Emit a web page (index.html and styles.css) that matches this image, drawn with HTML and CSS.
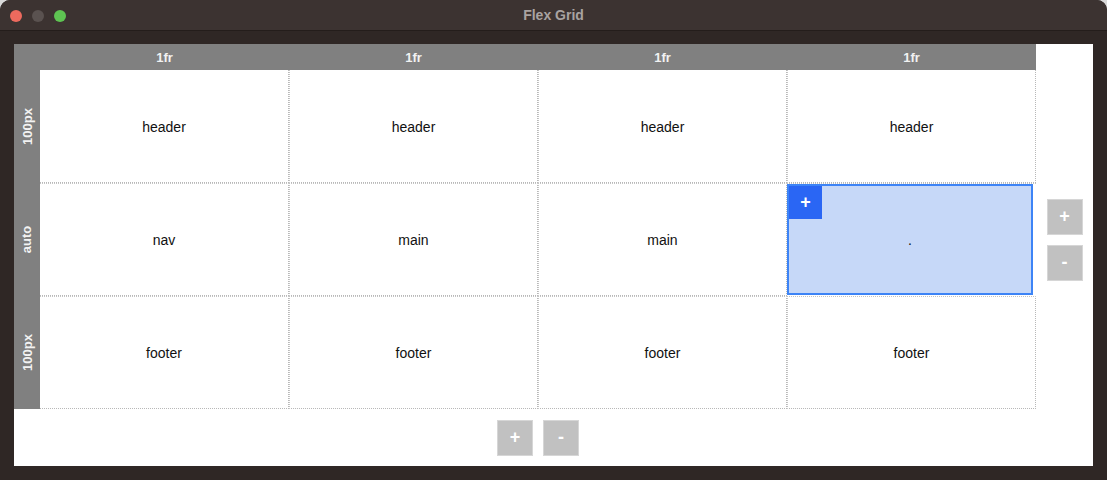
FILE: index.html
```html
<!DOCTYPE html>
<html lang="en">
<head>
    <meta charset="UTF-8">
    <meta name="viewport" content="width=device-width, initial-scale=1.0">
    <title>Flex Grid</title>
    <link rel="stylesheet" href="styles.css">
</head>
<body>

<div class="window">
    <div class="titlebar">
        <div class="lights">
            <span class="light red"></span>
            <span class="light gray"></span>
            <span class="light green"></span>
        </div>
        <div class="title">Flex Grid</div>
    </div>

    <div class="frame">
        <div class="editor">
            <!-- column labels -->
            <div class="corner"></div>
            <div class="col-label">1fr</div>
            <div class="col-label">1fr</div>
            <div class="col-label">1fr</div>
            <div class="col-label">1fr</div>
            <div class="blank"></div>

            <!-- row 1 -->
            <div class="row-label"><span>100px</span></div>
            <div class="cell">header</div>
            <div class="cell">header</div>
            <div class="cell">header</div>
            <div class="cell">header</div>
            <div class="row-controls">
                <button class="ctrl">+</button>
                <button class="ctrl">-</button>
            </div>

            <!-- row 2 -->
            <div class="row-label"><span>auto</span></div>
            <div class="cell">nav</div>
            <div class="cell">main</div>
            <div class="cell">main</div>
            <div class="cell">
                <div class="selected">
                    <button class="add-area">+</button>
                    .
                </div>
            </div>

            <!-- row 3 -->
            <div class="row-label"><span>100px</span></div>
            <div class="cell">footer</div>
            <div class="cell">footer</div>
            <div class="cell">footer</div>
            <div class="cell">footer</div>

            <!-- bottom -->
            <div class="blank"></div>
            <div class="col-controls">
                <button class="ctrl">+</button>
                <button class="ctrl">-</button>
            </div>
        </div>
    </div>
</div>

</body>
</html>
```

FILE: styles.css
```css
body {
    margin: 0;
    background-color: #d9d9d9;
    font-family: "Liberation Sans", Arial, sans-serif;
}

.window {
    width: 1107px;
    height: 480px;
    background-color: #2f2725;
    border-radius: 10px 10px 0 0;
    overflow: hidden;
}

/* Title bar */
.titlebar {
    position: relative;
    height: 30px;
    background-color: #3c3331;
    border-bottom: 1px solid #241d1b;
    display: flex;
    align-items: center;
    justify-content: center;
}

.lights {
    position: absolute;
    left: 10px;
    top: 10px;
    display: flex;
    gap: 10px;
}

.light {
    width: 12px;
    height: 12px;
    border-radius: 50%;
}

.light.red { background-color: #ed6a5e; }
.light.gray { background-color: #5a5250; }
.light.green { background-color: #5ec452; }

.title {
    color: #a9a3a1;
    font-size: 14px;
    font-weight: bold;
}

/* Content frame */
.frame {
    padding: 13px 14px 14px 14px;
}

.editor {
    width: 1079px;
    height: 422px;
    background-color: #fff;
    display: grid;
    grid-template-columns: 26px repeat(4, 249px) 57px;
    grid-template-rows: 26px repeat(3, 113px) 57px;
}

.corner {
    background-color: #808080;
}

.col-label {
    background-color: #808080;
    color: #f2f2f2;
    font-size: 13px;
    font-weight: bold;
    display: flex;
    align-items: center;
    justify-content: center;
}

.row-label {
    grid-column: 1;
    background-color: #808080;
    color: #f2f2f2;
    font-size: 13px;
    font-weight: bold;
    display: flex;
    align-items: center;
    justify-content: center;
}

.row-label span {
    transform: rotate(-90deg);
    white-space: nowrap;
}

/* Grid cells */
.cell {
    border-right: 1px dotted #b8b8b8;
    border-bottom: 1px dotted #b8b8b8;
    display: flex;
    align-items: center;
    justify-content: center;
    padding-top: 1px;
    font-size: 14px;
    color: #111;
}

/* inner lines are drawn twice, like neighbouring cell borders */
.cell + .cell {
    border-left: 1px dotted #c4c4c4;
}

.row-label ~ .row-label ~ .cell {
    border-top: 1px dotted #c4c4c4;
}

.cell:has(.selected) {
    align-items: stretch;
    justify-content: stretch;
    border: none;
    padding: 0 3px 1px 0;
}

.selected {
    position: relative;
    flex: 1;
    background-color: #c6d8f8;
    border: 2px solid #3d84f6;
    display: flex;
    align-items: center;
    justify-content: center;
}

.add-area {
    position: absolute;
    top: 0;
    left: 0;
    width: 33px;
    height: 33px;
    border: none;
    background-color: #2a66f4;
    color: #fff;
    font-family: "Liberation Sans", Arial, sans-serif;
    font-size: 18px;
    font-weight: bold;
    padding: 0;
}

/* Add / remove buttons */
.row-controls {
    grid-column: 6;
    grid-row: 2 / 5;
    display: flex;
    flex-direction: column;
    align-items: center;
    justify-content: center;
    gap: 10px;
}

.col-controls {
    grid-column: 2 / 6;
    display: flex;
    align-items: center;
    justify-content: center;
    gap: 10px;
}

.ctrl {
    width: 36px;
    height: 36px;
    padding: 0;
    background-color: #c1c1c1;
    border: 1px solid #d6d6d6;
    color: #fff;
    font-family: "Liberation Sans", Arial, sans-serif;
    font-size: 18px;
    font-weight: bold;
}
```
